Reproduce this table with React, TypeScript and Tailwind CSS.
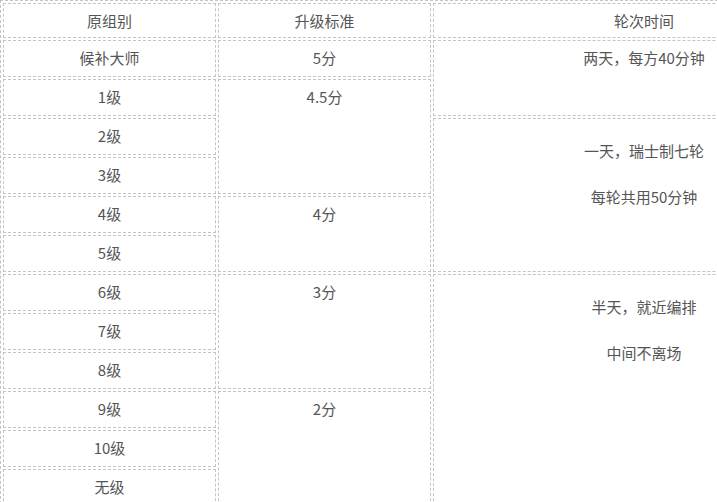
import React from "react";

const cell =
  "border border-dashed border-[#c4c4c4] px-2 pt-[5px] pb-[7px] leading-[23px] text-center align-top";
const head =
  "border border-dashed border-[#c4c4c4] px-2 pt-[5px] pb-[5px] leading-[23px] text-center align-top";

const levels = ["候补大师", "1级", "2级", "3级", "4级", "5级", "6级", "7级", "8级", "9级", "10级", "无级"];

// score column: which row starts a cell and how many rows it spans
const scores: Record<number, { text: string; span: number }> = {
  0: { text: "5分", span: 1 },
  1: { text: "4.5分", span: 3 },
  4: { text: "4分", span: 2 },
  6: { text: "3分", span: 3 },
  9: { text: "2分", span: 3 },
};

const rounds: Record<number, { lines: string[]; span: number }> = {
  0: { lines: ["两天，每方40分钟"], span: 2 },
  2: { lines: ["一天，瑞士制七轮", "每轮共用50分钟"], span: 4 },
  6: { lines: ["半天，就近编排", "中间不离场"], span: 6 },
};

export default function App() {
  return (
    <div className="w-[717px] h-[502px] overflow-hidden bg-white">
      <table
        className="border-separate border-spacing-[2px] border border-dashed border-[#c4c4c4] w-[858px] text-[15px] text-[#555]"
        style={{ fontFamily: '"Noto Sans CJK SC", "Microsoft YaHei", sans-serif' }}
      >
        <colgroup>
          <col className="w-[213px]" />
          <col className="w-[213px]" />
          <col />
        </colgroup>
        <tbody>
          <tr>
            <td className={head}>原组别</td>
            <td className={head}>升级标准</td>
            <td className={head}>轮次时间</td>
          </tr>
          {levels.map((lvl, i) => (
            <tr key={lvl}>
              <td className={cell}>{lvl}</td>
              {scores[i] && (
                <td className={cell} rowSpan={scores[i].span}>
                  {scores[i].text}
                </td>
              )}
              {rounds[i] && (
                <td className={cell} rowSpan={rounds[i].span}>
                  {rounds[i].lines.length === 1 ? (
                    rounds[i].lines[0]
                  ) : (
                    <>
                      <p className="mt-[15px]">{rounds[i].lines[0]}</p>
                      <p className="mt-[23px]">{rounds[i].lines[1]}</p>
                    </>
                  )}
                </td>
              )}
            </tr>
          ))}
        </tbody>
      </table>
    </div>
  );
}
